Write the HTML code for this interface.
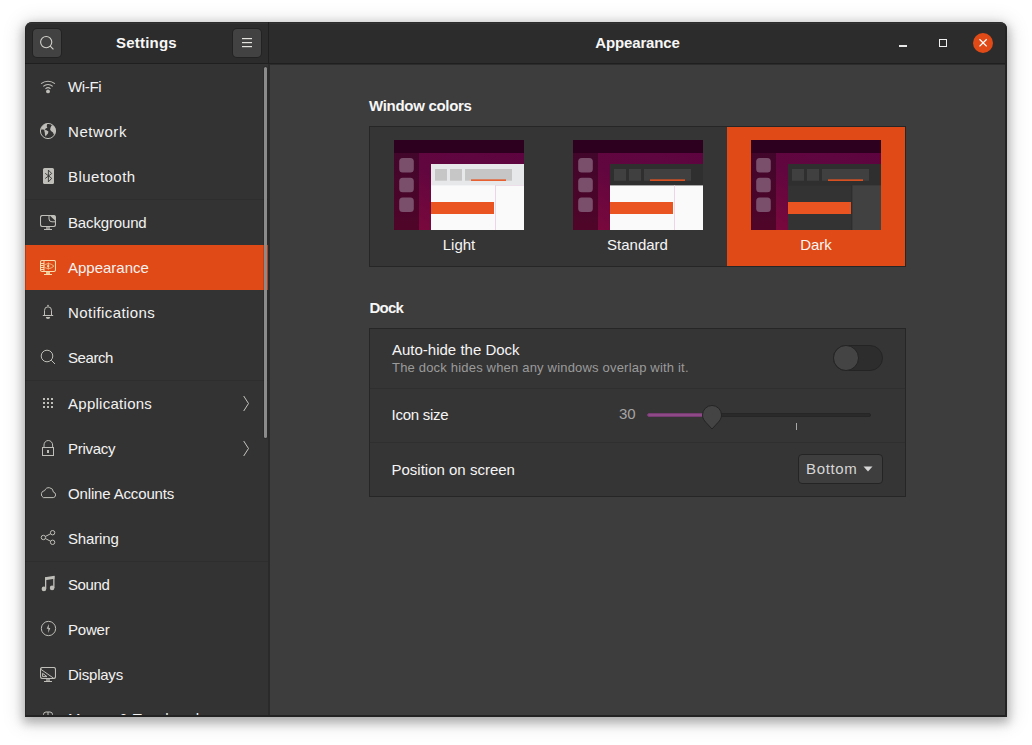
<!DOCTYPE html>
<html lang="en">
<head>
<meta charset="utf-8">
<title>Settings - Appearance</title>
<style>
*{box-sizing:border-box;margin:0;padding:0}
html,body{width:1032px;height:745px;overflow:hidden;background:#fff}
body{font-family:"Liberation Sans",sans-serif;font-size:15px;color:#f2f2f2;position:relative}
#win{position:absolute;left:25px;top:22px;width:982px;height:695px;border-radius:7px 7px 0 0;background:#3d3d3d;overflow:hidden;
 box-shadow:0 4px 10px 2px rgba(0,0,0,.24),0 3px 20px 4px rgba(0,0,0,.13)}
#edge{position:absolute;left:0;top:0;width:982px;height:695px;border-right:2px solid #232323;border-bottom:2px solid #232323;border-left:1px solid rgba(0,0,0,.18);pointer-events:none}
#hdr{position:absolute;left:0;top:0;width:982px;height:42px;background:#2c2c2c;border-bottom:1px solid #1f1f1f}
#hdr .split{position:absolute;left:243px;top:0;width:1px;height:42px;background:#1f1f1f}
.hbtn{position:absolute;top:7px;width:28px;height:28px;border-radius:4px;background:#424242;box-shadow:0 0 0 1px rgba(0,0,0,.22)}
.title{position:absolute;top:0;height:41px;line-height:41px;font-weight:bold;font-size:15px;text-align:center;color:#f7f7f7}
#side{position:absolute;left:0;top:42px;width:243px;height:653px;background:#333}
#sdiv{position:absolute;left:243px;top:42px;width:2px;height:653px;background:#2a2a2a}
.row{position:relative;height:45px;line-height:45px;padding-left:43px;font-size:15px;color:#f2f2f2;white-space:nowrap}
.row.sel{background:#e04a16}
.row svg.ic{position:absolute;left:14px;top:14px;width:16px;height:16px}
.row svg.ch{position:absolute;left:214px;top:14px;width:16px;height:16px}
.sep{height:1px;background:#2e2e2e}
#sbar{position:absolute;left:239px;top:44.500px;width:3px;height:371px;border-radius:2px;background:#8b8b8b;box-shadow:0 0 0 1px rgba(0,0,0,.14)}
#main{position:absolute;left:245px;top:42px;width:737px;height:653px;background:#3d3d3d}
.h2{position:absolute;font-weight:bold;font-size:15px;color:#f7f7f7}
.box{position:absolute;border:1px solid #262626;background:#353535}

#abs{position:absolute;left:-25px;top:-22px;width:1032px;height:745px}
#abs>*{position:absolute}
.lbl{font-size:15px;color:#f5f5f5;white-space:nowrap;line-height:18px}
.sub{font-size:13px;color:#9b9b9b;white-space:nowrap;line-height:16px}
.tile{top:127px;height:139px;width:178.33px}
.tile.sel{background:#e04a16}
.thumb{top:140px;width:130px;height:90px;overflow:hidden}
.tlabel{top:236px;width:178px;text-align:center;font-size:15px;line-height:18px;color:#f5f5f5}
.rsep{left:370px;width:535px;height:1px;background:#2f2f2f}
</style>
</head>
<body>
<svg width="0" height="0" style="position:absolute"><defs>
<linearGradient id="gbg" x1="1" y1="0" x2="0" y2="1"><stop offset="0" stop-color="#5c0440"/><stop offset="0.55" stop-color="#62063f"/><stop offset="1" stop-color="#80093c"/></linearGradient>
<linearGradient id="gdock" x1="0" y1="0" x2="0" y2="1"><stop offset="0" stop-color="#40062c"/><stop offset="1" stop-color="#4f0528"/></linearGradient>
<g id="tbase"><rect width="130" height="90" fill="url(#gbg)"/><rect width="25" height="90" fill="url(#gdock)"/><rect width="130" height="13" fill="#2c001e"/><rect x="5.200" y="18" width="14.600" height="14.500" rx="3.500" fill="#7a4f6c"/><rect x="5.200" y="37.700" width="14.600" height="14.500" rx="3.500" fill="#7a4f6c"/><rect x="5.200" y="57.500" width="14.600" height="14.500" rx="3.500" fill="#7a4f6c"/></g>
</defs></svg>
<div id="win">
  <div id="hdr"><div style="position:absolute;left:0;top:1px;width:982px;height:1px;background:#333"></div>
    <div class="hbtn" style="left:8px"><svg style="position:absolute;left:5px;top:5px;width:18px;height:18px" viewBox="0 0 18 18" fill="none" stroke="#d2d1cb" stroke-width="1.100"><circle cx="8.200" cy="8.100" r="5.600"/><path d="M12.300 12.200L15.400 15.400"/></svg></div>
    <div class="title" style="left:0;width:243px;letter-spacing:0.2px">Settings</div>
    <div class="hbtn" style="left:208px"><svg style="position:absolute;left:9px;top:9px;width:10px;height:10px" viewBox="0 0 10 10" fill="#e4e3df"><rect x="0" y="0" width="10" height="1.200"/><rect x="0" y="4" width="10" height="1.200"/><rect x="0" y="8" width="10" height="1.200"/></svg></div>
    <div class="split"></div>
    <div class="title" style="left:244px;width:737px;letter-spacing:-0.15px">Appearance</div>
  </div>
  <div id="side">
    <div class="row" style="letter-spacing:-0.36px"><svg class="ic" style="left:15px;top:14px;width:16px;height:16px" viewBox="0 0 16 16" fill="none" stroke="#bfbeb8" stroke-width="1"><path d="M1.100 5.700A10.700 10.700 0 0 1 14.900 5.700M3.300 8.300A7.300 7.300 0 0 1 12.700 8.300M5.500 10.800A3.700 3.700 0 0 1 10.500 10.800" stroke-width="1.100"/><circle cx="8" cy="13.400" r="1.900" fill="#bfbeb8" stroke="none"/></svg>Wi-Fi</div>
    <div class="row" style="letter-spacing:0.57px"><svg class="ic" style="left:15px;top:14px;width:16px;height:16px" viewBox="0 0 16 16" fill="none" stroke="#bfbeb8" stroke-width="1"><circle cx="8" cy="8" r="7.600"/><path d="M0.900 6.600Q1.400 2.600 5.300 0.900L7.300 1.100 6.700 3 7.300 4.800 5.600 5.500 5 7 3 6.600zM4.100 7.300L6 6.900 8.400 8.600 8 10.600 6.500 12 5.800 13.500 5 12 4.800 9.500zM11.500 2.400L13 2.200 15 4.500 15.600 8 14.800 11 13.800 11.500 13 9.500 11 8 10.100 6.500 10.600 4.500z" fill="#bfbeb8" stroke="none"/></svg>Network</div>
    <div class="row" style="letter-spacing:0.47px"><svg class="ic" style="left:15px;top:14px;width:16px;height:16px" viewBox="0 0 16 16" fill="none" stroke="#bfbeb8" stroke-width="1"><rect x="3" y="0" width="11" height="16" rx="1.500" fill="#bfbeb8" stroke="none"/><path d="M5.200 5.300L11.700 10.300 8.400 13.900V2.100L11.700 5.500 5.200 10.500" stroke="#333" stroke-width="0.900"/></svg>Bluetooth</div>
    <div class="sep"></div>
    <div class="row" style="letter-spacing:-0.15px"><svg class="ic" style="left:15px;top:15px;width:16px;height:16px" viewBox="0 0 16 16" fill="none" stroke="#bfbeb8" stroke-width="1"><rect x="0.500" y="0.500" width="15" height="11" rx="2" stroke-width="1.100"/><rect x="6" y="12" width="4" height="2" fill="#8f8e8a" stroke="none"/><rect x="4" y="14" width="8" height="1" fill="#bfbeb8" stroke="none"/><path d="M9 0.500V4Q9 6.800 12 6.800H15.500"/><path d="M10.300 1L15 1 15 5.600z" fill="#bfbeb8" stroke="none"/></svg>Background</div>
    <div class="row sel"><svg class="ic" style="left:15px;top:15px;width:16px;height:16px" viewBox="0 0 16 16" fill="none" stroke="#f6dcae" stroke-width="1"><rect x="0.500" y="0.500" width="15" height="11" rx="1.500" stroke-width="1.100"/><path d="M4 0.500V11.500M0.500 3.500H4M0.500 5.500H4M0.500 7.500H4M0.500 9.500H4"/><path d="M3.100 6.100Q8.500 1 13.900 6.100Q8.500 11.200 3.100 6.100z" stroke="#f2bd86" stroke-width="0.900"/><path d="M8.400 2.600V9.600" stroke="#efb27a" stroke-width="1.200"/><circle cx="8.200" cy="6.100" r="1.200" fill="#f6dcae" stroke="none"/><rect x="6" y="12" width="4" height="2" fill="#f3c88e" stroke="none"/><rect x="4" y="14" width="8" height="1" fill="#f6dcae" stroke="none"/></svg>Appearance</div>
    <div class="row" style="letter-spacing:0.43px"><svg class="ic" style="left:15px;top:14px;width:16px;height:16px" viewBox="0 0 16 16" fill="none" stroke="#bfbeb8" stroke-width="1"><path d="M4.500 11.500V6.300a3.500 3.500 0 0 1 7 0V11.500M2.800 11.500H13.200"/><circle cx="8" cy="1.600" r="0.800" fill="#bfbeb8" stroke="none"/><path d="M5.800 13.100a2.200 1.900 0 0 0 4.400 0z" fill="#bfbeb8" stroke="none"/></svg>Notifications</div>
    <div class="row" style="letter-spacing:-0.42px"><svg class="ic" style="left:15px;top:14px;width:16px;height:16px" viewBox="0 0 16 16" fill="none" stroke="#bfbeb8" stroke-width="1"><circle cx="7" cy="7" r="5.800"/><path d="M11.200 11.200L15 15"/></svg>Search</div>
    <div class="sep"></div>
    <div class="row" style="letter-spacing:0.27px"><svg class="ic" style="left:15px;top:14px;width:16px;height:16px" viewBox="0 0 16 16" fill="none" stroke="#bfbeb8" stroke-width="1"><g fill="#bfbeb8" stroke="none"><rect x="3" y="3" width="2" height="2"/><rect x="3" y="7" width="2" height="2"/><rect x="3" y="11" width="2" height="2"/><rect x="7" y="3" width="2" height="2"/><rect x="7" y="7" width="2" height="2"/><rect x="7" y="11" width="2" height="2"/><rect x="11" y="3" width="2" height="2"/><rect x="11" y="7" width="2" height="2"/><rect x="11" y="11" width="2" height="2"/></g></svg><svg class="ch" style="left:217px;top:14px;width:8px;height:17px" viewBox="0 0 8 17" fill="none" stroke="#c6c5bf" stroke-width="1"><path d="M1.700 1L6.500 8.500 1.700 16"/></svg>Applications</div>
    <div class="row" style="letter-spacing:-0.26px"><svg class="ic" style="left:15px;top:14px;width:16px;height:16px" viewBox="0 0 16 16" fill="none" stroke="#bfbeb8" stroke-width="1"><rect x="2.500" y="7.500" width="11" height="8"/><path d="M4 7.500V5a4.300 4.500 0 0 1 8.600 0V7.500"/><rect x="7" y="10" width="2" height="3" fill="#bfbeb8" stroke="none"/></svg><svg class="ch" style="left:217px;top:14px;width:8px;height:17px" viewBox="0 0 8 17" fill="none" stroke="#c6c5bf" stroke-width="1"><path d="M1.700 1L6.500 8.500 1.700 16"/></svg>Privacy</div>
    <div class="row" style="letter-spacing:-0.15px"><svg class="ic" style="left:15px;top:14px;width:16px;height:16px" viewBox="0 0 16 16" fill="none" stroke="#bfbeb8" stroke-width="1"><path d="M3.400 12.600H13.300A2.800 2.800 0 0 0 13.400 7.100A4.500 4.500 0 0 0 4.700 5.600A3.700 3.700 0 0 0 3.400 12.600z"/></svg>Online Accounts</div>
    <div class="row" style="letter-spacing:-0.15px"><svg class="ic" style="left:15px;top:14px;width:16px;height:16px" viewBox="0 0 16 16" fill="none" stroke="#bfbeb8" stroke-width="1"><circle cx="3.400" cy="7.500" r="2.200"/><circle cx="12.600" cy="2.700" r="2.200"/><circle cx="12.600" cy="12.300" r="2.200"/><path d="M5.300 6.500L10.700 3.700M5.300 8.500L10.700 11.300"/></svg>Sharing</div>
    <div class="sep"></div>
    <div class="row" style="letter-spacing:-0.38px"><svg class="ic" style="left:15px;top:13px;width:16px;height:17px" viewBox="0 0 16 17" fill="none" stroke="#bfbeb8" stroke-width="1"><g fill="#bfbeb8" stroke="none"><path d="M5 2.300L14.500 0.800V3.800L5 5.200z"/><rect x="5" y="2.500" width="1.300" height="11.400"/><rect x="13.200" y="1" width="1.300" height="11.900"/><circle cx="3.900" cy="13.900" r="2.300"/><circle cx="12.100" cy="12.900" r="2.300"/></g></svg>Sound</div>
    <div class="row" style="letter-spacing:-0.22px"><svg class="ic" style="left:15px;top:13px;width:17px;height:17px" viewBox="0 0 17 17" fill="none" stroke="#bfbeb8" stroke-width="1"><circle cx="8.500" cy="8.500" r="7.150"/><path d="M8.800 3.900L6.700 8.700H8.400L8.200 12.900 10.300 8H8.700z" fill="#bfbeb8" stroke="none"/></svg>Power</div>
    <div class="row" style="letter-spacing:-0.22px"><svg class="ic" style="left:15px;top:15px;width:16px;height:16px" viewBox="0 0 16 16" fill="none" stroke="#bfbeb8" stroke-width="1"><rect x="0.500" y="0.500" width="15" height="11" rx="2" stroke-width="1.100"/><rect x="6" y="12" width="4" height="2" fill="#8f8e8a" stroke="none"/><rect x="4" y="14" width="8" height="1" fill="#bfbeb8" stroke="none"/><path d="M0.700 2.200L13.600 11.200M2.600 6.300V9.600H7z"/></svg>Displays</div>
    <div class="row" style="letter-spacing:0.2px;margin-top:-1px"><svg class="ic" style="left:15px;top:15px;width:16px;height:16px" viewBox="0 0 16 16" fill="none" stroke="#bfbeb8" stroke-width="1"><rect x="3.500" y="1" width="9" height="14" rx="2.500"/><path d="M8 1V6"/></svg>Mouse &amp; Touchpad</div>
  </div>
  <div id="sdiv"></div>
  <div id="sbar"></div>
  <div id="main"><div style="position:absolute;left:0;top:0;width:737px;height:1px;background:#2c2c2c"></div></div>
  <div id="edge"></div>
  <div id="abs">
    <div style="left:899px;top:45px;width:8px;height:2px;background:#e8e8e8"></div>
    <div style="left:939px;top:39px;width:8px;height:8px;border:1.200px solid #f0f0f0"></div>
    <div style="left:973px;top:33px;width:20px;height:20px;border-radius:10px;background:#e04a16"></div>
    <svg style="left:973px;top:33px;width:20px;height:20px" viewBox="0 0 20 20" stroke="#fff" stroke-width="1.300" fill="none"><path d="M6.500 6.200L13.700 13.400M13.700 6.200L6.500 13.400"/></svg>
    <div class="h2" style="left:369px;top:97px;line-height:18px;letter-spacing:-0.3px">Window colors</div>
    <div class="box" style="left:369px;top:126px;width:537px;height:141px"></div>
    <div class="tile sel" style="left:726.67px"></div>
    <svg class="thumb" style="left:394px" viewBox="0 0 130 90"><use href="#tbase"/><rect x="37" y="24" width="93" height="66" fill="#fafafa"/><rect x="37" y="24" width="93" height="21.4" fill="#e6e8ea"/><rect x="41" y="29" width="12" height="11.7" fill="#c6c6c6"/><rect x="56" y="29" width="12" height="11.7" fill="#c6c6c6"/><rect x="71" y="29" width="47" height="11.7" fill="#c6c6c6"/><rect x="77" y="39.4" width="35" height="1.5" fill="#e95420"/><rect x="101" y="45" width="1" height="45" fill="#ead6e4"/><rect x="101" y="45" width="29" height="0.7" fill="#ead6e4"/><rect x="37" y="62" width="63" height="12" fill="#e95420"/></svg>
    <svg class="thumb" style="left:573px" viewBox="0 0 130 90"><use href="#tbase"/><rect x="37" y="24" width="93" height="66" fill="#fafafa"/><rect x="37" y="24" width="93" height="21.4" fill="#2f2f2f"/><rect x="41" y="29" width="12" height="11.7" fill="#404040"/><rect x="56" y="29" width="12" height="11.7" fill="#404040"/><rect x="71" y="29" width="47" height="11.7" fill="#404040"/><rect x="77" y="39.4" width="35" height="1.5" fill="#e95420"/><rect x="101" y="45.4" width="1" height="45" fill="#ead6e4"/><rect x="37" y="62" width="63" height="12" fill="#e95420"/></svg>
    <svg class="thumb" style="left:751px" viewBox="0 0 130 90"><use href="#tbase"/><rect x="37" y="24" width="93" height="66" fill="#333333"/><rect x="37" y="24" width="93" height="21.4" fill="#2f2f2f"/><rect x="41" y="29" width="12" height="11.7" fill="#404040"/><rect x="56" y="29" width="12" height="11.7" fill="#404040"/><rect x="71" y="29" width="47" height="11.7" fill="#404040"/><rect x="77" y="39.4" width="35" height="1.5" fill="#e95420"/><rect x="101" y="45.4" width="29" height="45" fill="#414141"/><rect x="100.5" y="45.4" width="0.8" height="45" fill="#2a2a2a"/><rect x="37" y="62" width="63" height="12" fill="#e95420"/></svg>
    <div class="tlabel" style="left:370px">Light</div>
    <div class="tlabel" style="left:548.5px">Standard</div>
    <div class="tlabel" style="left:727px">Dark</div>

    <div class="h2" style="left:369.500px;top:299px;line-height:18px;letter-spacing:-0.8px">Dock</div>
    <div class="box" style="left:369px;top:328px;width:537px;height:169px"></div>
    <div class="rsep" style="top:388px"></div>
    <div class="rsep" style="top:442px"></div>
    <div class="lbl" style="left:392px;top:341px">Auto-hide the Dock</div>
    <div class="sub" style="left:392px;top:360px;letter-spacing:0.19px">The dock hides when any windows overlap with it.</div>
    <div class="lbl" style="left:391.500px;top:406px;letter-spacing:-0.25px">Icon size</div>
    <div class="lbl" style="left:619px;top:405px;color:#a4a4a4">30</div>
    <div class="lbl" style="left:391.500px;top:461px">Position on screen</div>
    <div id="switch" style="left:833px;top:345px;width:50px;height:26px;border-radius:13px;background:#2d2d2d;border:1px solid #242424"></div>
    <div id="knob1" style="left:833px;top:345px;width:26px;height:26px;border-radius:13px;background:#444;border:1px solid #242424"></div>
    <div style="left:647px;top:413px;width:224px;height:4px;border-radius:2px;background:#2a2a2a;border:1px solid #262626"></div>
    <div style="left:647px;top:413px;width:64px;height:4px;border-radius:2px;background:#8d4a87;border:1px solid #763c71"></div>
    <svg style="left:700px;top:403px;width:24px;height:28px" viewBox="0 0 24 28"><path d="M12 2.5a9.5 9.5 0 0 1 9.5 9.5c0 3.2-1.6 5.6-3.6 7.6L12 26l-5.900-6.400c-2-2-3.600-4.400-3.600-7.600a9.500 9.500 0 0 1 9.500-9.500z" fill="#444" stroke="#242424" stroke-width="1"/></svg>
    <div style="left:796px;top:423px;width:1px;height:7px;background:#a8a8a8"></div>
    <div style="left:798px;top:454px;width:85px;height:30px;border-radius:4px;background:#3e3e3e;border:1px solid #242424"></div>
    <div class="lbl" style="left:806px;top:460px;color:#d6d6d6;letter-spacing:0.65px">Bottom</div>
    <svg style="left:863px;top:466px;width:10px;height:6px" viewBox="0 0 10 6"><path d="M0.500 0.500h9L5 5.500z" fill="#d6d6d6"/></svg>
  </div>
</div>
</body>
</html>
